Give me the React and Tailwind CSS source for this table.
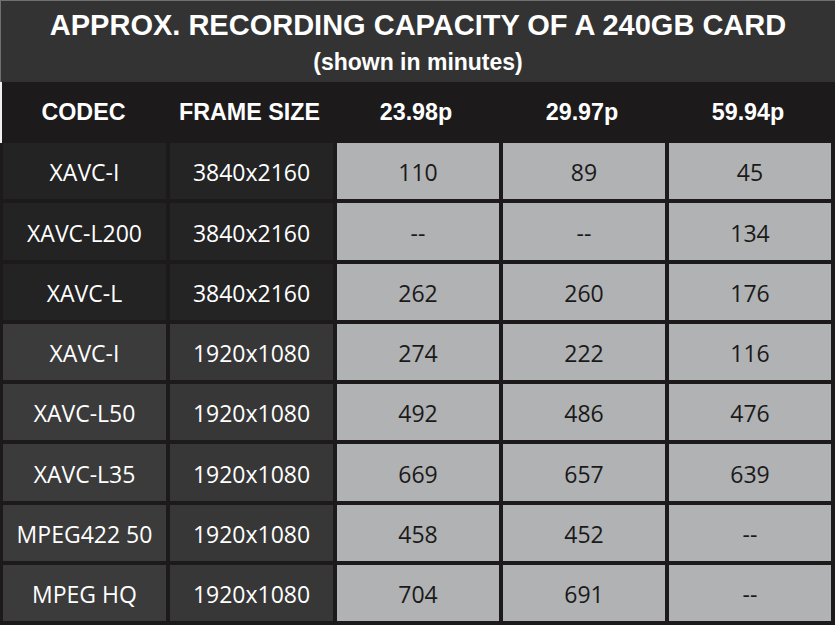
import React from "react";

const rows = [
  ["XAVC-I", "3840x2160", "110", "89", "45"],
  ["XAVC-L200", "3840x2160", "--", "--", "134"],
  ["XAVC-L", "3840x2160", "262", "260", "176"],
  ["XAVC-I", "1920x1080", "274", "222", "116"],
  ["XAVC-L50", "1920x1080", "492", "486", "476"],
  ["XAVC-L35", "1920x1080", "669", "657", "639"],
  ["MPEG422 50", "1920x1080", "458", "452", "--"],
  ["MPEG HQ", "1920x1080", "704", "691", "--"],
];

const headers = ["CODEC", "FRAME SIZE", "23.98p", "29.97p", "59.94p"];

export default function App() {
  return (
    <div className="w-[835px] h-[625px] bg-white flex flex-col">
      <div
        className="h-[82px] bg-[#333333] border-t border-l border-[#707070] flex flex-col items-center text-white font-bold"
        style={{ fontFamily: '"Liberation Sans", Arial, sans-serif' }}
      >
        <div className="text-[29px] leading-none mt-[10px]">
          APPROX. RECORDING CAPACITY OF A 240GB CARD
        </div>
        <div className="text-[23px] leading-none mt-[11px]">(shown in minutes)</div>
      </div>
      <div
        className="h-[61px] bg-[#1c1a1b] border-l-2 border-[#f0f0f0] grid grid-cols-[161px_163px_162px_162px_162px] gap-x-[4px] pl-[1px] pr-[4px] items-center text-white font-bold text-[23.3px]"
        style={{ fontFamily: '"Liberation Sans", Arial, sans-serif' }}
      >
        {headers.map((h) => (
          <div key={h} className="text-center">
            {h}
          </div>
        ))}
      </div>
      <div
        className="flex-1 bg-[#1c1a1b] pl-[3px] pr-[4px] pb-[4px] grid grid-cols-[163px_163px_162px_162px_162px] grid-rows-8 gap-x-[4px] gap-y-[4px] text-[23px]"
        style={{ fontFamily: '"Open Sans", "Noto Sans", sans-serif' }}
      >
        {rows.map((r, i) => {
          const dark = i < 3;
          return r.map((c, j) => (
            <div
              key={i + "-" + j}
              className={
                "flex items-center justify-center pt-[3px] " +
                (j === 0
                  ? dark
                    ? "bg-[#232323] text-white"
                    : "bg-[#3b3b3b] text-white"
                  : j === 1
                  ? dark
                    ? "bg-[#242424] text-white"
                    : "bg-[#373737] text-white"
                  : "bg-[#b1b2b4] text-[#1a1a1a]")
              }
            >
              {c}
            </div>
          ));
        })}
      </div>
    </div>
  );
}
